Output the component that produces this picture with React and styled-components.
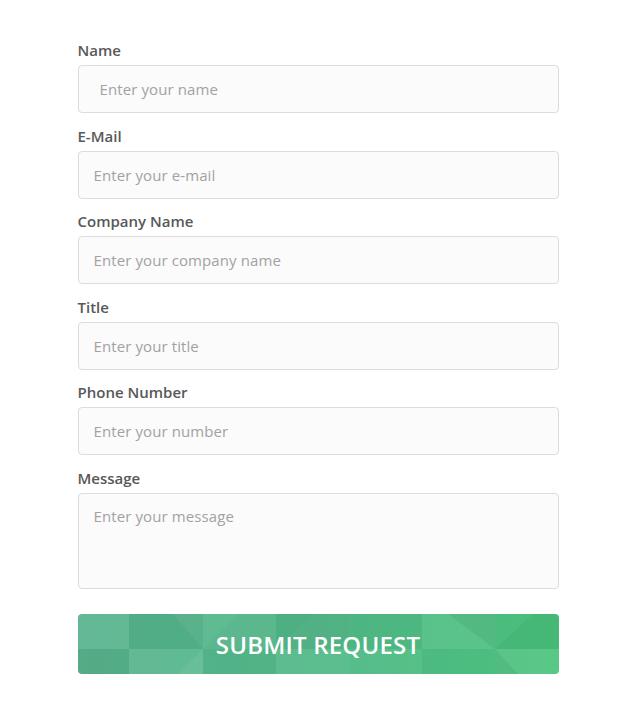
import React from "react";
import styled, { createGlobalStyle } from "styled-components";

const Global = createGlobalStyle`
  html, body { margin: 0; padding: 0; background: #ffffff; }
  body { font-family: "Open Sans", "DejaVu Sans", sans-serif; }
  * { box-sizing: border-box; }
`;

const Page = styled.div`
  display: flex;
  justify-content: center;
  padding: 40px 0 40px 0;
`;

const Form = styled.form`
  width: 481px;
  display: flex;
  flex-direction: column;
  gap: 12.5px;
`;

const Field = styled.div`
  display: flex;
  flex-direction: column;
  gap: 4px;
`;

const Label = styled.label`
  font-size: 15px;
  line-height: 21px;
  font-weight: 600;
  color: #585858;
`;

const fieldCss = `
  width: 100%;
  border: 1px solid #dcdcdc;
  border-radius: 4px;
  background: #fbfbfb;
  font-family: "Open Sans", "DejaVu Sans", sans-serif;
  font-size: 15px;
  letter-spacing: 0.1px;
  color: #444;
  outline: none;
  &::placeholder { color: #a2a2a2; }
`;

const Input = styled.input`
  ${fieldCss}
  height: 48px;
  padding: 0 0 0 ${(p) => p.$pad || 15}px;
`;

const TextArea = styled.textarea`
  ${fieldCss}
  height: 96px;
  padding: 12px 15px;
  resize: none;
  line-height: 21px;
`;

const Button = styled.button`
  position: relative;
  margin-top: 12.5px;
  height: 60px;
  width: 100%;
  border: none;
  border-radius: 4px;
  overflow: hidden;
  background: linear-gradient(90deg, #5bb48f 0%, #52b989 50%, #4ec57f 100%);
  cursor: pointer;
  padding: 0;
`;

const Pattern = styled.svg`
  position: absolute;
  inset: 0;
  width: 100%;
  height: 100%;
`;

const ButtonText = styled.span`
  position: relative;
  top: 1px;
  font-family: "Open Sans", "DejaVu Sans", sans-serif;
  font-size: 24px;
  font-weight: 600;
  color: #ffffff;
  letter-spacing: 0.2px;
`;

function ButtonPattern() {
  const dark = "rgba(0,60,30,0.07)";
  const light = "rgba(255,255,255,0.06)";
  return (
    <Pattern viewBox="0 0 481 60" preserveAspectRatio="none" aria-hidden="true">
      <rect x="0" y="0" width="51" height="35" fill={light} />
      <rect x="0" y="35" width="51" height="25" fill={dark} />
      <rect x="51" y="0" width="74" height="35" fill={dark} />
      <polygon points="95,0 125,0 125,35" fill={light} />
      <rect x="51" y="35" width="74" height="25" fill={light} />
      <polygon points="125,35 100,60 125,60" fill={light} />
      <rect x="125" y="0" width="73" height="35" fill={light} />
      <polygon points="125,35 160,0 198,0 198,35" fill={dark} opacity="0.4" />
      <rect x="125" y="35" width="73" height="25" fill={dark} opacity="0.5" />
      <rect x="198" y="0" width="73" height="35" fill={dark} />
      <polygon points="198,35 235,0 271,0 271,35" fill={light} opacity="0.5" />
      <rect x="198" y="35" width="73" height="25" fill={light} />
      <rect x="271" y="0" width="73" height="35" fill={dark} opacity="0.6" />
      <rect x="271" y="35" width="73" height="25" fill={light} opacity="0.5" />
      <rect x="344" y="0" width="73" height="35" fill={light} />
      <polygon points="370,0 417,0 417,35" fill={dark} />
      <rect x="344" y="35" width="73" height="25" fill={dark} opacity="0.4" />
      <rect x="417" y="0" width="64" height="35" fill={dark} opacity="0.6" />
      <polygon points="417,35 455,0 481,0 481,35" fill={dark} opacity="0.6" />
      <rect x="417" y="35" width="64" height="25" fill={light} />
      <polygon points="417,35 440,60 417,60" fill={dark} />
    </Pattern>
  );
}

const fields = [
  { label: "Name", placeholder: "Enter your name", pad: 21 },
  { label: "E-Mail", placeholder: "Enter your e-mail" },
  { label: "Company Name", placeholder: "Enter your company name" },
  { label: "Title", placeholder: "Enter your title" },
  { label: "Phone Number", placeholder: "Enter your number" },
];

export default function App() {
  return (
    <>
      <Global />
      <Page>
        <Form onSubmit={(e) => e.preventDefault()}>
          {fields.map((f) => (
            <Field key={f.label}>
              <Label>{f.label}</Label>
              <Input placeholder={f.placeholder} $pad={f.pad} />
            </Field>
          ))}
          <Field>
            <Label>Message</Label>
            <TextArea placeholder="Enter your message" />
          </Field>
          <Button type="submit">
            <ButtonPattern />
            <ButtonText>SUBMIT REQUEST</ButtonText>
          </Button>
        </Form>
      </Page>
    </>
  );
}
